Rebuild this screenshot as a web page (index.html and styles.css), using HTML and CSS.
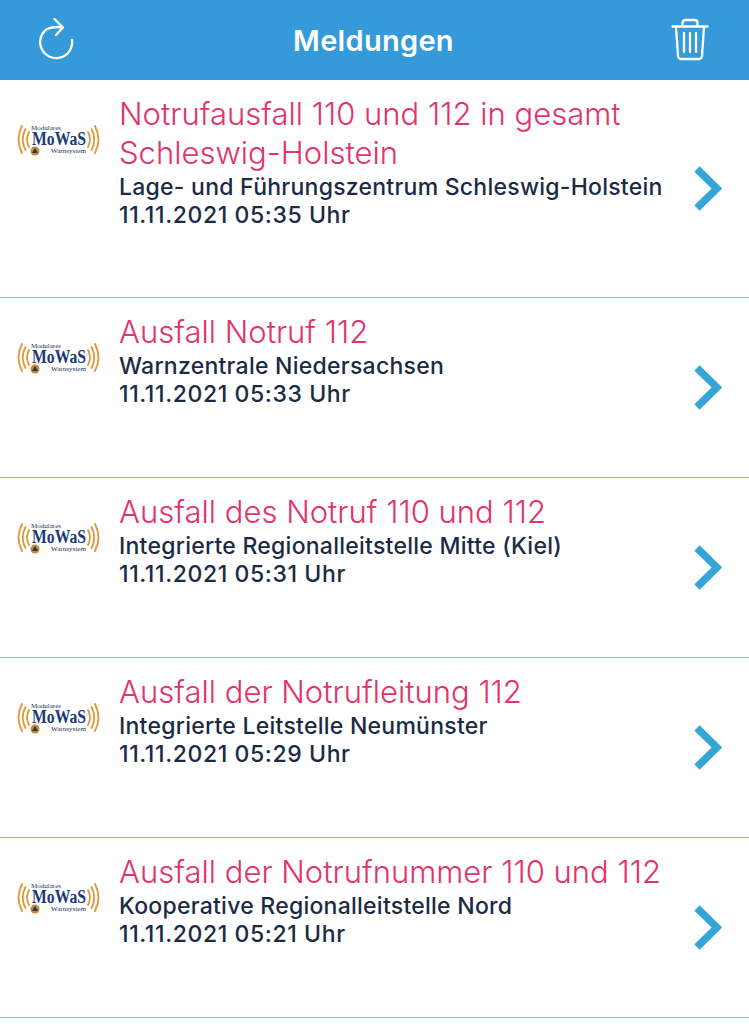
FILE: index.html
```html
<!DOCTYPE html>
<html lang="de">
<head>
  <meta charset="UTF-8" />
  <meta name="viewport" content="width=device-width, initial-scale=1.0" />
  <title>Meldungen</title>
  <link rel="stylesheet" href="styles.css">
</head>
<body>
  <svg class="defs" width="0" height="0">
    <defs>
      <g id="mowas">
        <g fill="none" stroke="#e09a3c" stroke-width="1.900" stroke-linecap="round">
          <path d="M7 5 Q0 18.500 7 32" />
          <path d="M10.500 8 Q5 18.500 10.500 29" />
          <path d="M14 11 Q10 18.500 14 26" />
          <path d="M80 5 Q87 18.500 80 32" />
          <path d="M76.500 8 Q82 18.500 76.500 29" />
          <path d="M73 11 Q77 18.500 73 26" />
        </g>
        <text x="16" y="8.500" class="logo-small" textLength="30" lengthAdjust="spacingAndGlyphs">Modulares</text>
        <text x="17" y="24" class="logo-main" textLength="54" lengthAdjust="spacingAndGlyphs">MoWaS</text>
        <circle cx="20" cy="30" r="4.500" fill="#c9872f" />
        <path d="M20 27 L23 32 H17 Z" fill="#1d3a66" />
        <text x="36" y="31.500" class="logo-small" textLength="35" lengthAdjust="spacingAndGlyphs">Warnsystem</text>
      </g>
      <g id="chevron">
        <path d="M4 3 L24 22.500 L4 42" fill="none" stroke="#35a5d8" stroke-width="7.500" />
      </g>
    </defs>
  </svg>

  <header class="topbar">
    <svg class="icon-reload" width="40" height="44" viewBox="0 0 40 44" fill="none" stroke="#fff" stroke-width="2.300" stroke-linecap="round" stroke-linejoin="round">
      <path d="M26.500 9.500 Q18 8 11 11 A16 16 0 1 0 36 22" />
      <path d="M18.500 1 L27 9.500 L20 17" />
    </svg>
    <h1>Meldungen</h1>
    <svg class="icon-trash" width="38" height="44" viewBox="0 0 38 44" fill="none" stroke="#fff" stroke-width="2.300" stroke-linecap="round" stroke-linejoin="round">
      <path d="M1.500 8.500 H36.500" />
      <path d="M11.500 8 V5 Q11.500 2 14.500 2 H23.500 Q26.500 2 26.500 5 V8" />
      <path d="M5 9 L7 38 Q7.300 41 10 41 H28 Q30.700 41 31 38 L33 9" />
      <path d="M13 15 V34 M19 15 V34 M25 15 V34" />
    </svg>
  </header>

  <ul class="list">
    <li class="item item-tall">
      <svg class="logo" width="88" height="38" viewBox="0 0 86 38"><use href="#mowas" /></svg>
      <div class="text">
        <div class="title">Notrufausfall 110 und 112 in gesamt Schleswig-Holstein</div>
        <div class="info">Lage- und Führungszentrum Schleswig-Holstein</div>
        <div class="info date">11.11.2021 05:35 Uhr</div>
      </div>
      <svg class="chevron" width="29" height="45" viewBox="0 0 29 45"><use href="#chevron" /></svg>
    </li>
    <li class="item">
      <svg class="logo" width="88" height="38" viewBox="0 0 86 38"><use href="#mowas" /></svg>
      <div class="text">
        <div class="title">Ausfall Notruf 112</div>
        <div class="info">Warnzentrale Niedersachsen</div>
        <div class="info date">11.11.2021 05:33 Uhr</div>
      </div>
      <svg class="chevron" width="29" height="45" viewBox="0 0 29 45"><use href="#chevron" /></svg>
    </li>
    <li class="item">
      <svg class="logo" width="88" height="38" viewBox="0 0 86 38"><use href="#mowas" /></svg>
      <div class="text">
        <div class="title">Ausfall des Notruf 110 und 112</div>
        <div class="info">Integrierte Regionalleitstelle Mitte (Kiel)</div>
        <div class="info date">11.11.2021 05:31 Uhr</div>
      </div>
      <svg class="chevron" width="29" height="45" viewBox="0 0 29 45"><use href="#chevron" /></svg>
    </li>
    <li class="item">
      <svg class="logo" width="88" height="38" viewBox="0 0 86 38"><use href="#mowas" /></svg>
      <div class="text">
        <div class="title">Ausfall der Notrufleitung 112</div>
        <div class="info">Integrierte Leitstelle Neumünster</div>
        <div class="info date">11.11.2021 05:29 Uhr</div>
      </div>
      <svg class="chevron" width="29" height="45" viewBox="0 0 29 45"><use href="#chevron" /></svg>
    </li>
    <li class="item">
      <svg class="logo" width="88" height="38" viewBox="0 0 86 38"><use href="#mowas" /></svg>
      <div class="text">
        <div class="title">Ausfall der Notrufnummer 110 und 112</div>
        <div class="info">Kooperative Regionalleitstelle Nord</div>
        <div class="info date">11.11.2021 05:21 Uhr</div>
      </div>
      <svg class="chevron" width="29" height="45" viewBox="0 0 29 45"><use href="#chevron" /></svg>
    </li>
  </ul>
</body>
</html>
```

FILE: styles.css
```css
* {
  margin: 0;
  padding: 0;
  box-sizing: border-box;
  font-family: 'Inter', 'Liberation Sans', sans-serif;
}

body {
  background-color: #fff;
  height: 1024px;
  overflow: hidden;
}

.defs {
  display: block;
  height: 0;
}

.topbar {
  height: 80px;
  background-color: #359ad9;
  display: flex;
  align-items: center;
  justify-content: space-between;
  padding: 0 40px 0 36px;
}

.topbar h1 {
  color: #fff;
  font-size: 29px;
  font-weight: 600;
  letter-spacing: 0.3px;
}

.list {
  list-style: none;
}

.item {
  height: 180px;
  display: flex;
  align-items: center;
  border-bottom: 1px solid #7fc0ea;
  padding-left: 14px;
  padding-right: 27px;
}

.item-tall {
  height: 218px;
}

.logo {
  align-self: flex-start;
  flex: none;
  margin-top: 41px;
}

.logo-small {
  font-family: 'Liberation Serif', serif;
  font-size: 7px;
  fill: #24365c;
}

.logo-main {
  font-family: 'Liberation Serif', serif;
  font-size: 18px;
  font-weight: 700;
  fill: #1d3a78;
}

.text {
  align-self: flex-start;
  flex: 1;
  padding-top: 14px;
  padding-left: 17px;
  min-width: 0;
}

.title {
  color: #e3326c;
  font-size: 31px;
  font-weight: 300;
  line-height: 39px;
  margin-bottom: 1px;
  letter-spacing: 0.02px;
}

.info {
  color: #1b2b45;
  font-size: 23px;
  font-weight: 500;
  line-height: 28px;
  letter-spacing: 0.25px;
}

.date {
  letter-spacing: 0.6px;
}

.chevron {
  flex: none;
}
```
